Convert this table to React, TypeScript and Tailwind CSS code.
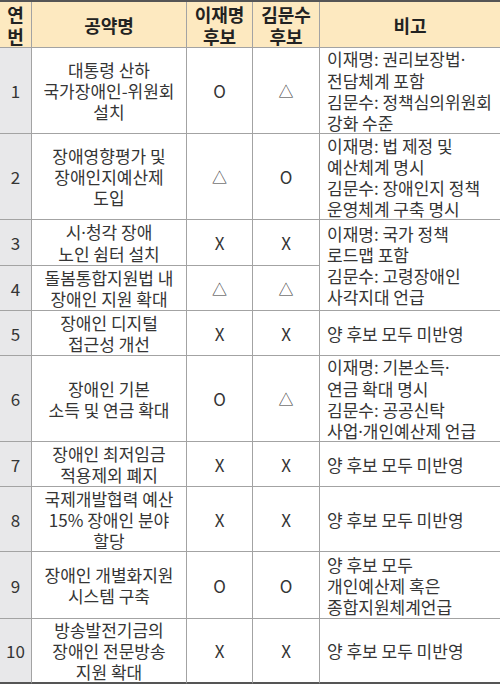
import type React from "react"

type Row = {
  no: string
  title: string[]
  lee: string
  kim: string
  note?: string[]
  noteSpan?: boolean
}

const rows: Row[] = [
  {
    no: "1",
    title: ["대통령 산하", "국가장애인-위원회", "설치"],
    lee: "O",
    kim: "△",
    note: ["이재명: 권리보장법·", "전담체계 포함", "김문수: 정책심의위원회", "강화 수준"],
  },
  {
    no: "2",
    title: ["장애영향평가 및", "장애인지예산제", "도입"],
    lee: "△",
    kim: "O",
    note: ["이재명: 법 제정 및", "예산체계 명시", "김문수: 장애인지 정책", "운영체계 구축 명시"],
  },
  {
    no: "3",
    title: ["시·청각 장애", "노인 쉼터 설치"],
    lee: "X",
    kim: "X",
    note: ["이재명: 국가 정책", "로드맵 포함", "김문수: 고령장애인", "사각지대 언급"],
    noteSpan: true,
  },
  {
    no: "4",
    title: ["돌봄통합지원법 내", "장애인 지원 확대"],
    lee: "△",
    kim: "△",
  },
  {
    no: "5",
    title: ["장애인 디지털", "접근성 개선"],
    lee: "X",
    kim: "X",
    note: ["양 후보 모두 미반영"],
  },
  {
    no: "6",
    title: ["장애인 기본", "소득 및 연금 확대"],
    lee: "O",
    kim: "△",
    note: ["이재명: 기본소득·", "연금 확대 명시", "김문수: 공공신탁", "사업·개인예산제 언급"],
  },
  {
    no: "7",
    title: ["장애인 최저임금", "적용제외 폐지"],
    lee: "X",
    kim: "X",
    note: ["양 후보 모두 미반영"],
  },
  {
    no: "8",
    title: ["국제개발협력 예산", "15% 장애인 분야", "할당"],
    lee: "X",
    kim: "X",
    note: ["양 후보 모두 미반영"],
  },
  {
    no: "9",
    title: ["장애인 개별화지원", "시스템 구축"],
    lee: "O",
    kim: "O",
    note: ["양 후보 모두", "개인예산제 혹은", "종합지원체계언급"],
  },
  {
    no: "10",
    title: ["방송발전기금의", "장애인 전문방송", "지원 확대"],
    lee: "X",
    kim: "X",
    note: ["양 후보 모두 미반영"],
  },
]

// middle dot is full width in the CJK font, so set it in a latin one
const Text: React.FC<{ s: string }> = ({ s }) => {
  const parts = s.split("·")
  return (
    <>
      {parts.map((p, i) => (
        <span key={i}>
          {i > 0 && <span style={{ fontFamily: '"Noto Sans", sans-serif' }}>·</span>}
          {p}
        </span>
      ))}
    </>
  )
}

const Lines: React.FC<{ lines: string[] }> = ({ lines }) => (
  <div>
    {lines.map((l, i) => (
      <span key={i} className="block whitespace-nowrap">
        <Text s={l} />
      </span>
    ))}
  </div>
)

const Mark: React.FC<{ v: string }> = ({ v }) =>
  v === "△" ? <span className="text-[15px]">△</span> : <span>{v}</span>

const App: React.FC = () => {
  const cell = "border-r border-b border-[#a3a3a3] flex items-center justify-center text-center"
  const head = "bg-[#fde9c0] font-bold text-[#222] text-[18px] leading-[22px]"
  const last = (i: number) => (i === rows.length - 1 ? "border-b-2 border-b-[#555]" : "")

  return (
    <div
      className="w-[500px] h-[684px] bg-white text-[#353535] text-[17px] leading-[21px]"
      style={{ fontFamily: '"Noto Sans CJK KR", "Noto Sans", sans-serif' }}
    >
      <div className="grid grid-cols-[32px_155px_66px_67px_180px] grid-rows-[46px_86px_86px_46px_45px_45px_86px_45px_65px_67px_65px] border-t-2 border-[#555]">
        {/* header */}
        <div className={`${cell} ${head}`}>
          <Lines lines={["연", "번"]} />
        </div>
        <div className={`${cell} ${head}`}>공약명</div>
        <div className={`${cell} ${head}`}>
          <Lines lines={["이재명", "후보"]} />
        </div>
        <div className={`${cell} ${head}`}>
          <Lines lines={["김문수", "후보"]} />
        </div>
        <div className={`border-b border-[#a3a3a3] flex items-center justify-center ${head}`}>비고</div>

        {rows.map((r, i) => (
          <div key={r.no} className="contents">
            <div className={`${cell} ${last(i)} bg-[#e8e8ea]`}>{r.no}</div>
            <div className={`${cell} ${last(i)}`}>
              <Lines lines={r.title} />
            </div>
            <div className={`${cell} ${last(i)}`}>
              <Mark v={r.lee} />
            </div>
            <div className={`${cell} ${last(i)}`}>
              <Mark v={r.kim} />
            </div>
            {r.note && (
              <div
                className={`border-b border-[#a3a3a3] ${last(i)} flex items-center pl-[7px] ${
                  r.noteSpan ? "row-span-2" : ""
                }`}
              >
                <Lines lines={r.note} />
              </div>
            )}
          </div>
        ))}
      </div>
    </div>
  )
}

export default App
